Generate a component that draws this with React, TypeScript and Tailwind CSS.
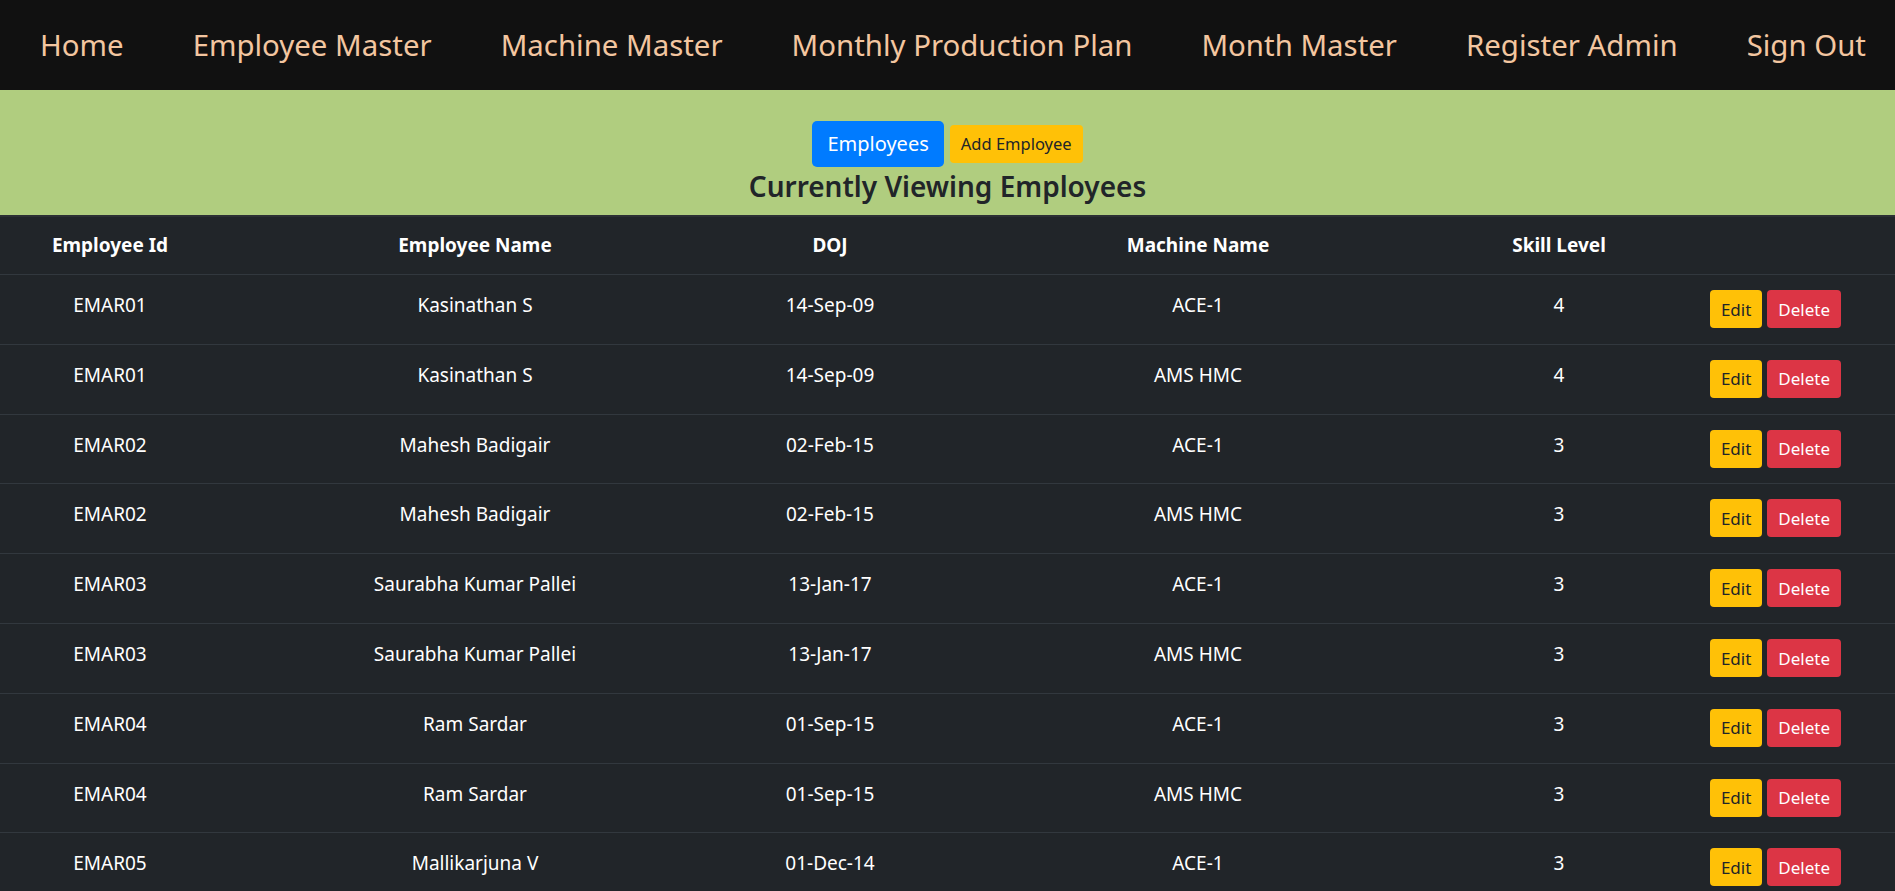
import React from 'react';

const navLinks = [
  'Home',
  'Employee Master',
  'Machine Master',
  'Monthly Production Plan',
  'Month Master',
  'Register Admin',
  'Sign Out',
];

type Employee = {
  id: string;
  name: string;
  doj: string;
  machine: string;
  skill: number;
};

const employees: Employee[] = [
  { id: 'EMAR01', name: 'Kasinathan S', doj: '14-Sep-09', machine: 'ACE-1', skill: 4 },
  { id: 'EMAR01', name: 'Kasinathan S', doj: '14-Sep-09', machine: 'AMS HMC', skill: 4 },
  { id: 'EMAR02', name: 'Mahesh Badigair', doj: '02-Feb-15', machine: 'ACE-1', skill: 3 },
  { id: 'EMAR02', name: 'Mahesh Badigair', doj: '02-Feb-15', machine: 'AMS HMC', skill: 3 },
  { id: 'EMAR03', name: 'Saurabha Kumar Pallei', doj: '13-Jan-17', machine: 'ACE-1', skill: 3 },
  { id: 'EMAR03', name: 'Saurabha Kumar Pallei', doj: '13-Jan-17', machine: 'AMS HMC', skill: 3 },
  { id: 'EMAR04', name: 'Ram Sardar', doj: '01-Sep-15', machine: 'ACE-1', skill: 3 },
  { id: 'EMAR04', name: 'Ram Sardar', doj: '01-Sep-15', machine: 'AMS HMC', skill: 3 },
  { id: 'EMAR05', name: 'Mallikarjuna V', doj: '01-Dec-14', machine: 'ACE-1', skill: 3 },
  { id: 'EMAR05', name: 'Mallikarjuna V', doj: '01-Dec-14', machine: 'AMS HMC', skill: 3 },
];

function NavBar() {
  return (
    <nav className="flex h-[90px] items-center gap-[69px] bg-[#111111] pt-[2px] pl-[40px]">
      {navLinks.map((link) => (
        <a
          key={link}
          href="#"
          className="whitespace-nowrap text-[29.4px] font-normal leading-none text-[#f3c6a0]"
        >
          {link}
        </a>
      ))}
    </nav>
  );
}

function Toolbar() {
  return (
    <div className="flex flex-col items-center bg-[#b0cd7f] pt-[31px] pb-[11px]">
      <div className="flex items-center gap-[6px]">
        <button className="h-[46px] rounded-[5px] bg-[#007bff] px-[15px] text-[20px] leading-none text-white">
          Employees
        </button>
        <button className="h-[38px] rounded-[4px] bg-[#ffc107] px-[11px] text-[16.5px] leading-none text-[#212529]">
          Add Employee
        </button>
      </div>
      <h3 className="mt-[3px] text-[28px] font-semibold leading-[1.2] text-[#212529]">
        Currently Viewing Employees
      </h3>
    </div>
  );
}

function EmployeeTable() {
  return (
    <table className="w-full table-fixed border-collapse bg-[#212529] text-center text-[19px] text-white">
      <colgroup>
        <col className="w-[220px]" />
        <col className="w-[510px]" />
        <col className="w-[200px]" />
        <col className="w-[536px]" />
        <col className="w-[186px]" />
        <col className="w-[243px]" />
      </colgroup>
      <thead>
        <tr className="h-[59px] border-t-2 border-[#2c3034]">
          <th className="align-middle font-bold">Employee Id</th>
          <th className="align-middle font-bold">Employee Name</th>
          <th className="align-middle font-bold">DOJ</th>
          <th className="align-middle font-bold">Machine Name</th>
          <th className="align-middle font-bold">Skill Level</th>
          <th />
        </tr>
      </thead>
      <tbody>
        {employees.map((e, i) => (
          <tr key={i} className="h-[69.8px] border-t border-[#32383e]">
            <td className="pt-[16px] align-top leading-[1.5]">{e.id}</td>
            <td className="pt-[16px] align-top leading-[1.5]">{e.name}</td>
            <td className="pt-[16px] align-top leading-[1.5]">{e.doj}</td>
            <td className="pt-[16px] align-top leading-[1.5]">{e.machine}</td>
            <td className="pt-[16px] align-top leading-[1.5]">{e.skill}</td>
            <td className="pt-[15px] align-top">
              <div className="flex justify-center gap-[5px] pl-[4px]">
                <button className="h-[38px] rounded-[4px] bg-[#ffc107] px-[11px] text-[17px] leading-none text-[#212529]">
                  Edit
                </button>
                <button className="h-[38px] rounded-[4px] bg-[#dc3545] px-[11px] text-[17px] leading-none text-white">
                  Delete
                </button>
              </div>
            </td>
          </tr>
        ))}
      </tbody>
    </table>
  );
}

export default function App() {
  return (
    <div className="min-h-screen bg-[#212529] font-['Segoe_UI','Noto_Sans',sans-serif]">
      <NavBar />
      <Toolbar />
      <EmployeeTable />
    </div>
  );
}
